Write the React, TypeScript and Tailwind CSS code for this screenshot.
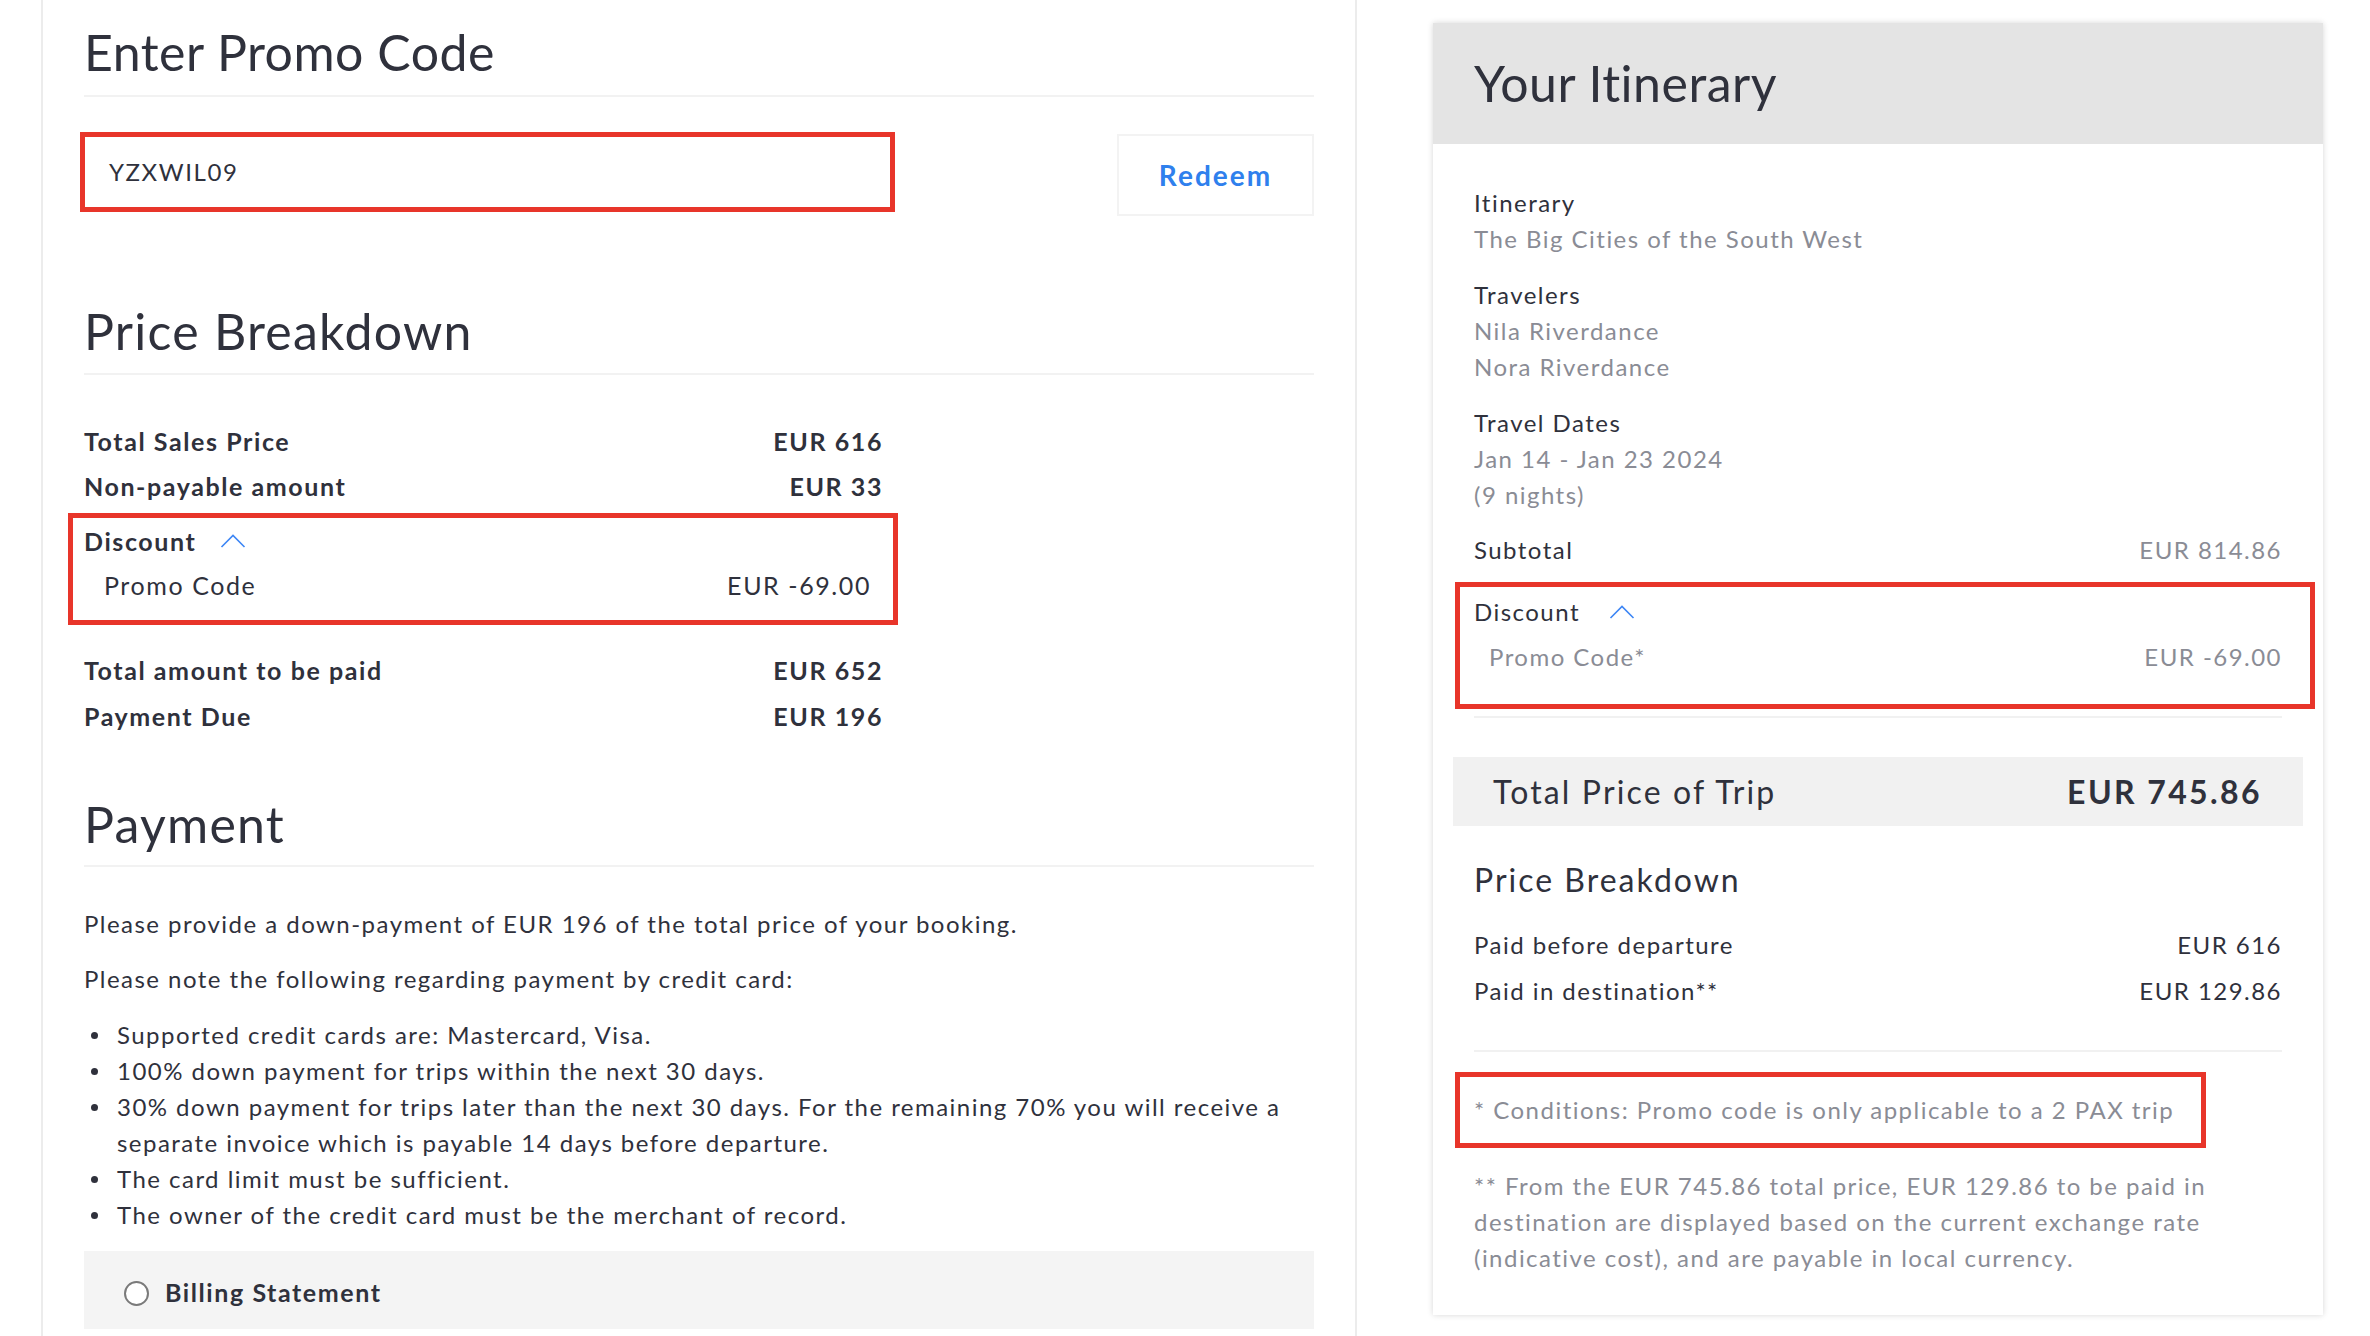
import React from "react";

const Chevron = ({ className = "" }: { className?: string }) => (
  <svg width="26" height="14" viewBox="0 0 26 14" fill="none" className={className}>
    <path d="M1.5 13 L13 1.5 L24.5 13" stroke="#3d86f5" strokeWidth="1.6" />
  </svg>
);

const LeftRow = ({ label, value }: { label: string; value: string }) => (
  <div className="flex w-[799px] justify-between text-[25px] font-bold leading-[45px] tracking-[1.58px]">
    <span>{label}</span>
    <span>{value}</span>
  </div>
);

export default function App() {
  return (
    <div className="flex h-[1336px] w-[2370px] overflow-hidden bg-white text-[#2f313c] tracking-[1.47px] [font-family:Lato,sans-serif]">
      <div className="w-[41px] shrink-0" />
      {/* Left panel */}
      <div className="w-[1316px] shrink-0 border-x-2 border-[#ececec] px-[41px]">
        <h2 className="pt-[22px] text-[50px] font-normal leading-[60px] tracking-[0.5px]">Enter Promo Code</h2>
        <div className="mt-[13px] h-[2px] bg-[#f2f2f2]" />
        <div className="mt-[35px] flex items-start justify-between">
          <div className="-ml-[4px] flex h-[80px] w-[815px] items-center border-[5px] border-[#e8352a] pl-[24px] text-[24px] tracking-[1.6px]">
            YZXWIL09
          </div>
          <button className="mt-[2px] flex h-[82px] w-[197px] items-center justify-center border-2 border-[#f3f3f3] text-[28px] font-bold tracking-[2px] text-[#2f80ed]">
            Redeem
          </button>
        </div>

        <h2 className="mt-[85px] text-[50px] font-normal leading-[60px] tracking-[1.25px]">Price Breakdown</h2>
        <div className="mt-[12px] h-[2px] bg-[#f2f2f2]" />
        <div className="mt-[44px]">
          <LeftRow label="Total Sales Price" value="EUR 616" />
          <LeftRow label="Non-payable amount" value="EUR 33" />
        </div>
        <div className="-ml-[16px] mt-[4px] w-[830px] border-[5px] border-[#e8352a] px-[11px] pb-[13px] pt-[1px] text-[25px] leading-[44px] tracking-[1.58px]">
          <div className="flex items-center font-bold">
            <span>Discount</span>
            <Chevron className="ml-[24px]" />
          </div>
          <div className="flex justify-between pl-[20px] pr-[11px]">
            <span>Promo Code</span>
            <span>EUR -69.00</span>
          </div>
        </div>
        <div className="mt-[22px] [&>div]:leading-[46px]">
          <LeftRow label="Total amount to be paid" value="EUR 652" />
          <LeftRow label="Payment Due" value="EUR 196" />
        </div>

        <h2 className="mt-[55px] text-[50px] font-normal leading-[60px] tracking-[1.25px]">Payment</h2>
        <div className="mt-[11px] h-[2px] bg-[#f2f2f2]" />
        <div className="text-[24px] leading-[36px]">
          <p className="mt-[39px]">Please provide a down-payment of EUR 196 of the total price of your booking.</p>
          <p className="mt-[19px]">Please note the following regarding payment by credit card:</p>
          <ul className="mt-[20px]">
            {[
              "Supported credit cards are: Mastercard, Visa.",
              "100% down payment for trips within the next 30 days.",
              null,
              "The card limit must be sufficient.",
              "The owner of the credit card must be the merchant of record.",
            ].map((t, i) => (
              <li key={i} className="flex">
                <span className="flex h-[36px] w-[33px] shrink-0 items-center">
                  <span className="ml-[7px] h-[7px] w-[7px] rounded-full bg-[#2f313c]" />
                </span>
                <span className="whitespace-nowrap">
                  {t ?? (
                    <>
                      30% down payment for trips later than the next 30 days. For the remaining 70% you will receive a
                      <br />
                      separate invoice which is payable 14 days before departure.
                    </>
                  )}
                </span>
              </li>
            ))}
          </ul>
        </div>
        <div className="mt-[18px] flex h-[78px] items-center bg-[#f4f4f4] pl-[40px] pt-[6px]">
          <span className="h-[25px] w-[25px] rounded-full border-2 border-[#7a7a7a] bg-white" />
          <span className="ml-[16px] text-[25px] font-bold tracking-[1.58px]">Billing Statement</span>
        </div>
      </div>

      {/* Right card */}
      <div className="ml-[76px] mt-[23px] w-[890px] shrink-0 self-start bg-white shadow-[0_0_6px_rgba(0,0,0,0.16)]">
        <div className="h-[121px] bg-[#e4e4e4] pl-[41px] pt-[30px]">
          <h2 className="text-[50px] font-normal leading-[60px] tracking-[0.5px]">Your Itinerary</h2>
        </div>
        <div className="px-[41px] pb-[39px] pt-[41px] text-[24px] leading-[36px]">
          <div>Itinerary</div>
          <div className="text-[#8a8c95]">The Big Cities of the South West</div>
          <div className="mt-[20px]">Travelers</div>
          <div className="text-[#8a8c95]">Nila Riverdance</div>
          <div className="text-[#8a8c95]">Nora Riverdance</div>
          <div className="mt-[20px]">Travel Dates</div>
          <div className="text-[#8a8c95]">Jan 14 - Jan 23 2024</div>
          <div className="text-[#8a8c95]">(9 nights)</div>
          <div className="mt-[19px] flex justify-between">
            <span>Subtotal</span>
            <span className="text-[#8a8c95]">EUR 814.86</span>
          </div>
          <div className="-ml-[19px] -mr-[33px] mt-[14px] border-[5px] border-[#e8352a] pb-[29px] pl-[14px] pr-[28px] pt-[7px]">
            <div className="flex items-center">
              <span>Discount</span>
              <Chevron className="ml-[29px]" />
            </div>
            <div className="mt-[9px] flex justify-between pl-[15px] text-[#8a8c95]">
              <span>Promo Code*</span>
              <span>EUR -69.00</span>
            </div>
          </div>
          <div className="mt-[7px] h-[2px] bg-[#f1f1f1]" />
          <div className="-mx-[21px] mt-[39px] flex h-[69px] items-center justify-between bg-[#f1f1f1] pl-[40px] pr-[41px] text-[32px]">
            <span className="tracking-[2.15px]">Total Price of Trip</span>
            <span className="font-bold tracking-[2.4px]">EUR 745.86</span>
          </div>
          <div className="mt-[34px] text-[32px] leading-[40px] tracking-[2px]">Price Breakdown</div>
          <div className="mt-[22px] leading-[46px]">
            <div className="flex justify-between">
              <span>Paid before departure</span>
              <span>EUR 616</span>
            </div>
            <div className="flex justify-between">
              <span>Paid in destination**</span>
              <span>EUR 129.86</span>
            </div>
          </div>
          <div className="mt-[36px] h-[2px] bg-[#f1f1f1]" />
          <div className="-ml-[19px] mt-[20px] w-[751px] whitespace-nowrap border-[5px] border-[#e8352a] py-[15px] pl-[14px] text-[#8a8c95]">
            * Conditions: Promo code is only applicable to a 2 PAX trip
          </div>
          <div className="mt-[20px] whitespace-nowrap text-[#8a8c95]">
            ** From the EUR 745.86 total price, EUR 129.86 to be paid in
            <br />
            destination are displayed based on the current exchange rate
            <br />
            (indicative cost), and are payable in local currency.
          </div>
        </div>
      </div>
    </div>
  );
}
